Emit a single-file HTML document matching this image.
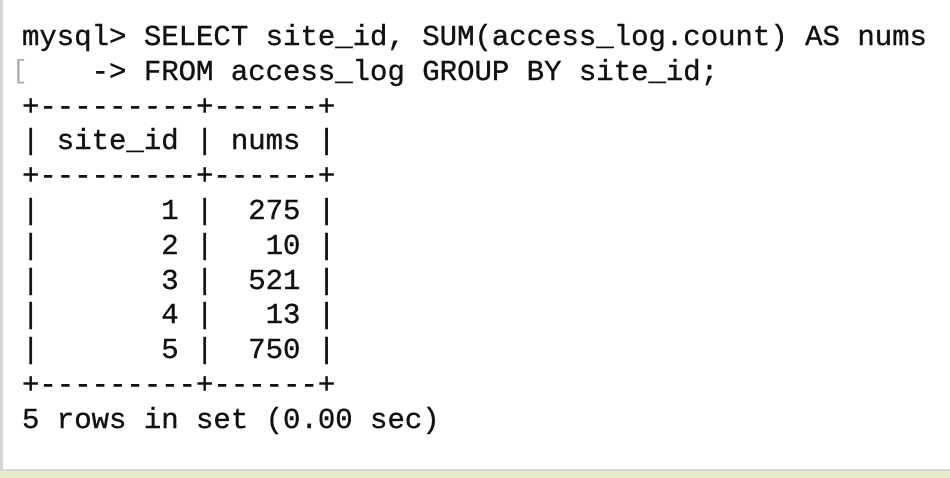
<!DOCTYPE html>
<html><head><meta charset="utf-8"><style>
html,body{margin:0;padding:0;width:950px;height:478px;overflow:hidden;background:#fff;}
.lb{position:absolute;left:0;top:0;width:3px;height:469px;background:#d4d4d4;}
.bt{position:absolute;left:0;top:469px;width:950px;height:2px;background:#d6d6d6;}
.gr{position:absolute;left:0;top:471px;width:950px;height:7px;background:#e6edcd;}
pre{position:absolute;left:22px;top:21px;margin:0;font-family:"Liberation Mono",monospace;font-size:29px;line-height:34.8px;color:#111;-webkit-text-stroke:0.4px #111;}
.br{position:absolute;left:12px;top:56px;font-family:"Liberation Mono",monospace;font-size:26px;color:#aaa;}
</style></head><body>
<div class="lb"></div><div class="bt"></div><div class="gr"></div>
<div class="br">[</div>
<pre>mysql&gt; SELECT site_id, SUM(access_log.count) AS nums
    -&gt; FROM access_log GROUP BY site_id;
+---------+------+
| site_id | nums |
+---------+------+
|       1 |  275 |
|       2 |   10 |
|       3 |  521 |
|       4 |   13 |
|       5 |  750 |
+---------+------+
5 rows in set (0.00 sec)</pre>
</body></html>
